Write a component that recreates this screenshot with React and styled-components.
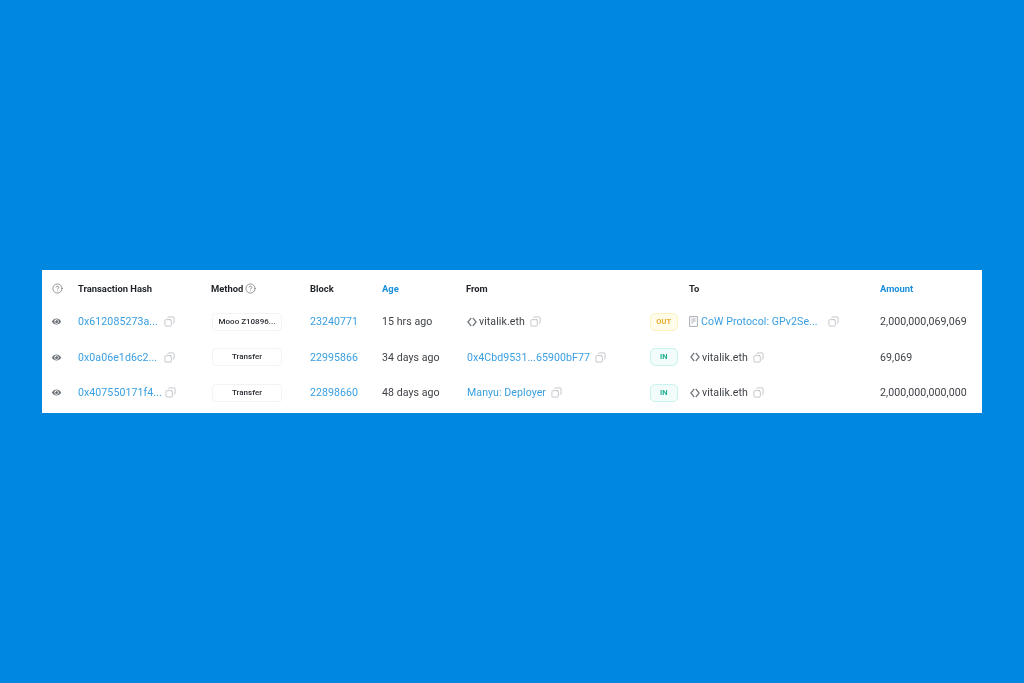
import styled, { createGlobalStyle } from 'styled-components';
import { CircleHelp, Copy } from 'lucide-react';
import { FaEye } from 'react-icons/fa';

const GlobalStyle = createGlobalStyle`
  html, body {
    margin: 0;
    padding: 0;
    background: #0087e0;
  }

  body {
    font-family: Roboto, "Liberation Sans", sans-serif;
  }
`;

const transactions = [
  {
    hash: '0x612085273a...',
    method: 'Mooo Z10896...',
    block: '23240771',
    age: '15 hrs ago',
    from: { label: 'vitalik.eth', kind: 'ens' },
    direction: 'OUT',
    to: { label: 'CoW Protocol: GPv2Se...', kind: 'contract', gap: 8 },
    amount: '2,000,000,069,069',
  },
  {
    hash: '0x0a06e1d6c2...',
    method: 'Transfer',
    block: '22995866',
    age: '34 days ago',
    from: { label: '0x4Cbd9531...65900bF77', kind: 'link' },
    direction: 'IN',
    to: { label: 'vitalik.eth', kind: 'ens' },
    amount: '69,069',
  },
  {
    hash: '0x407550171f4...',
    method: 'Transfer',
    block: '22898660',
    age: '48 days ago',
    from: { label: 'Manyu: Deployer', kind: 'link' },
    direction: 'IN',
    to: { label: 'vitalik.eth', kind: 'ens' },
    amount: '2,000,000,000,000',
  },
];

function EnsIcon() {
  return (
    <IconSvg width="10" height="10" viewBox="0 0 10 10">
      <path d="M4.2 1 .9 5l3.3 4M5.8 1l3.3 4-3.3 4" />
    </IconSvg>
  );
}

function ContractIcon() {
  return (
    <ContractSvg width="9" height="11" viewBox="0 0 9 11">
      <path d="M.6.6h7.8v9.8H.6zM2.4 3h4.2M2.4 5h4.2M2.4 7h2" />
    </ContractSvg>
  );
}

function Party({ label, kind, gap }) {
  return (
    <PartyCell $plain={kind === 'link'}>
      {kind === 'ens' && <EnsIcon />}
      {kind === 'contract' && <ContractIcon />}
      {kind === 'ens' ? <Text>{label}</Text> : <LinkText>{label}</LinkText>}
      <CopyIcon size={11} $gap={gap} />
    </PartyCell>
  );
}

export default function App() {
  return (
    <>
      <GlobalStyle />
      <Page>
        <Card>
          <HeaderRow>
            <span>
              <HelpIcon size={11} />
            </span>
            <HeadLabel>Transaction Hash</HeadLabel>
            <HeadLabel>
              Method <HelpIcon size={11} />
            </HeadLabel>
            <HeadLabel>Block</HeadLabel>
            <HeadLabel $active>Age</HeadLabel>
            <HeadLabel>From</HeadLabel>
            <span />
            <HeadLabel>To</HeadLabel>
            <HeadLabel $active>Amount</HeadLabel>
          </HeaderRow>

          {transactions.map((tx) => (
            <Row key={tx.hash}>
              <EyeIcon />
              <HashCell>
                <LinkText>{tx.hash}</LinkText>
                <CopyIcon size={11} />
              </HashCell>
              <MethodBadge>{tx.method}</MethodBadge>
              <LinkText>{tx.block}</LinkText>
              <Text>{tx.age}</Text>
              <Party {...tx.from} />
              <Direction $out={tx.direction === 'OUT'}>{tx.direction}</Direction>
              <Party {...tx.to} />
              <Text>{tx.amount}</Text>
            </Row>
          ))}
        </Card>
      </Page>
    </>
  );
}

const Page = styled.main`
  width: 1024px;
  height: 683px;
  padding: 270px 42px 0;
  box-sizing: border-box;
  overflow: hidden;
  background: #0087e0;
`;

/* the reference is a scaled-down capture, so everything in it is a little soft */
const Card = styled.section`
  width: 940px;
  height: 143px;
  padding: 0 10px;
  box-sizing: border-box;
  background: #ffffff;
  filter: blur(0.35px);
`;

const columns = '26px 133px 99px 72px 84px 183px 40px 191px 1fr';

const HeaderRow = styled.div`
  display: grid;
  grid-template-columns: ${columns};
  align-items: center;
  height: 36px;
  margin-bottom: -2px;
`;

const Row = styled.div`
  display: grid;
  grid-template-columns: ${columns};
  align-items: center;
  height: 35.5px;
`;

const HeadLabel = styled.span`
  display: flex;
  align-items: center;
  gap: 2px;
  font-size: 9.4px;
  font-weight: 700;
  color: ${(p) => (p.$active ? '#1a8fdb' : '#1f2328')};
`;

const Text = styled.span`
  font-size: 10.6px;
  letter-spacing: 0.06px;
  color: #3e4247;
  white-space: nowrap;
`;

const LinkText = styled(Text)`
  color: #3a9fe0;
`;

const HashCell = styled.div`
  display: flex;
  align-items: center;
  justify-content: space-between;
  width: 97px;
`;

const PartyCell = styled.div`
  display: flex;
  align-items: center;
  gap: 2px;
  padding-left: ${(p) => (p.$plain ? 1 : 0)}px;
`;

const MethodBadge = styled.span`
  display: block;
  width: 70px;
  height: 18px;
  margin-left: 1px;
  line-height: 15px;
  box-sizing: border-box;
  border: 1px solid #f2f3f5;
  border-radius: 4px;
  font-size: 8px;
  font-weight: 500;
  text-align: center;
  color: #2a2e33;
  white-space: nowrap;
`;

const Direction = styled.span`
  display: block;
  width: 27.5px;
  height: 18px;
  margin-left: 1px;
  line-height: 16px;
  box-sizing: border-box;
  border: 1px solid ${(p) => (p.$out ? '#fdf3c0' : '#c8f3ee')};
  border-radius: 5px;
  background: ${(p) => (p.$out ? '#fffdea' : '#f2fdfb')};
  color: ${(p) => (p.$out ? '#e6ab2e' : '#22ae8e')};
  font-size: 7.5px;
  font-weight: 700;
  text-align: center;
`;

const IconSvg = styled.svg`
  flex: none;
  margin-left: 1px;
  fill: none;
  stroke: #777d83;
  stroke-width: 1.3;
`;

const ContractSvg = styled.svg`
  flex: none;
  margin-left: 0;
  margin-right: 1px;
  fill: none;
  stroke: #a9aeb4;
  stroke-width: 1;
`;

const CopyIcon = styled(Copy)`
  flex: none;
  margin-left: ${(p) => p.$gap ?? 3}px;
  color: #b0b5ba;
  stroke-width: 1.6;
  transform: scaleX(-1);
`;

const HelpIcon = styled(CircleHelp)`
  display: block;
  color: #666c72;
  stroke-width: 1.5;
`;

const EyeIcon = styled(FaEye)`
  display: block;
  width: 9px;
  height: 9px;
  color: #6a7076;
`;
